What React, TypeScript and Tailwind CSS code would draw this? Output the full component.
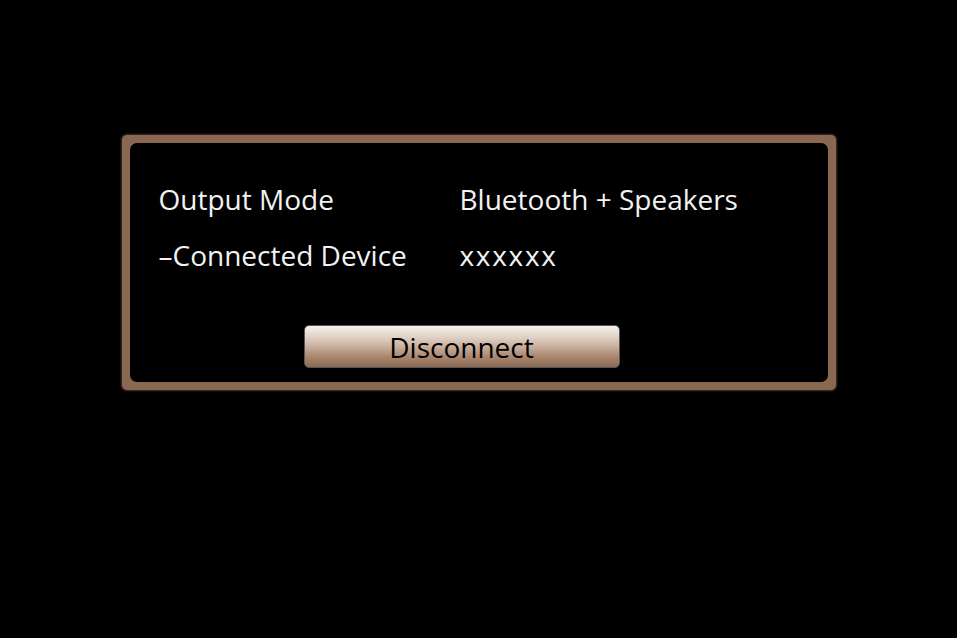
export default function App() {
  return (
    <div className="w-[957px] h-[638px] bg-black flex flex-col items-center" style={{ fontFamily: '"Open Sans", "DejaVu Sans", sans-serif' }}>
      <div className="mt-[135px] w-[714px] h-[255px] rounded-[5px] bg-[#8a6751] p-[8px] shadow-[0_0_2px_1px_rgba(138,103,81,0.5)]">
        <div className="w-full h-full bg-black rounded-[7px] flex flex-col pl-[29px] pt-[28px]">
          <div className="flex text-[28px] leading-[56px] text-[#f2f2f2]">
            <div className="w-[301px]">Output Mode</div>
            <div>Bluetooth + Speakers</div>
          </div>
          <div className="flex text-[28px] leading-[56px] text-[#f2f2f2]">
            <div className="w-[301px]">–Connected Device</div>
            <div className="tracking-[1.7px]">xxxxxx</div>
          </div>
          <div className="flex mt-[42px] ml-[145px]">
            <div className="w-[316px] h-[43px] rounded-[5px] border border-[#555] flex items-center justify-center text-[28px] leading-none text-black bg-[linear-gradient(to_bottom,#f6f2ee_0%,#e2d4c8_25%,#c8b09e_50%,#a9866e_75%,#8c6a52_100%)]">
              Disconnect
            </div>
          </div>
        </div>
      </div>
    </div>
  );
}
